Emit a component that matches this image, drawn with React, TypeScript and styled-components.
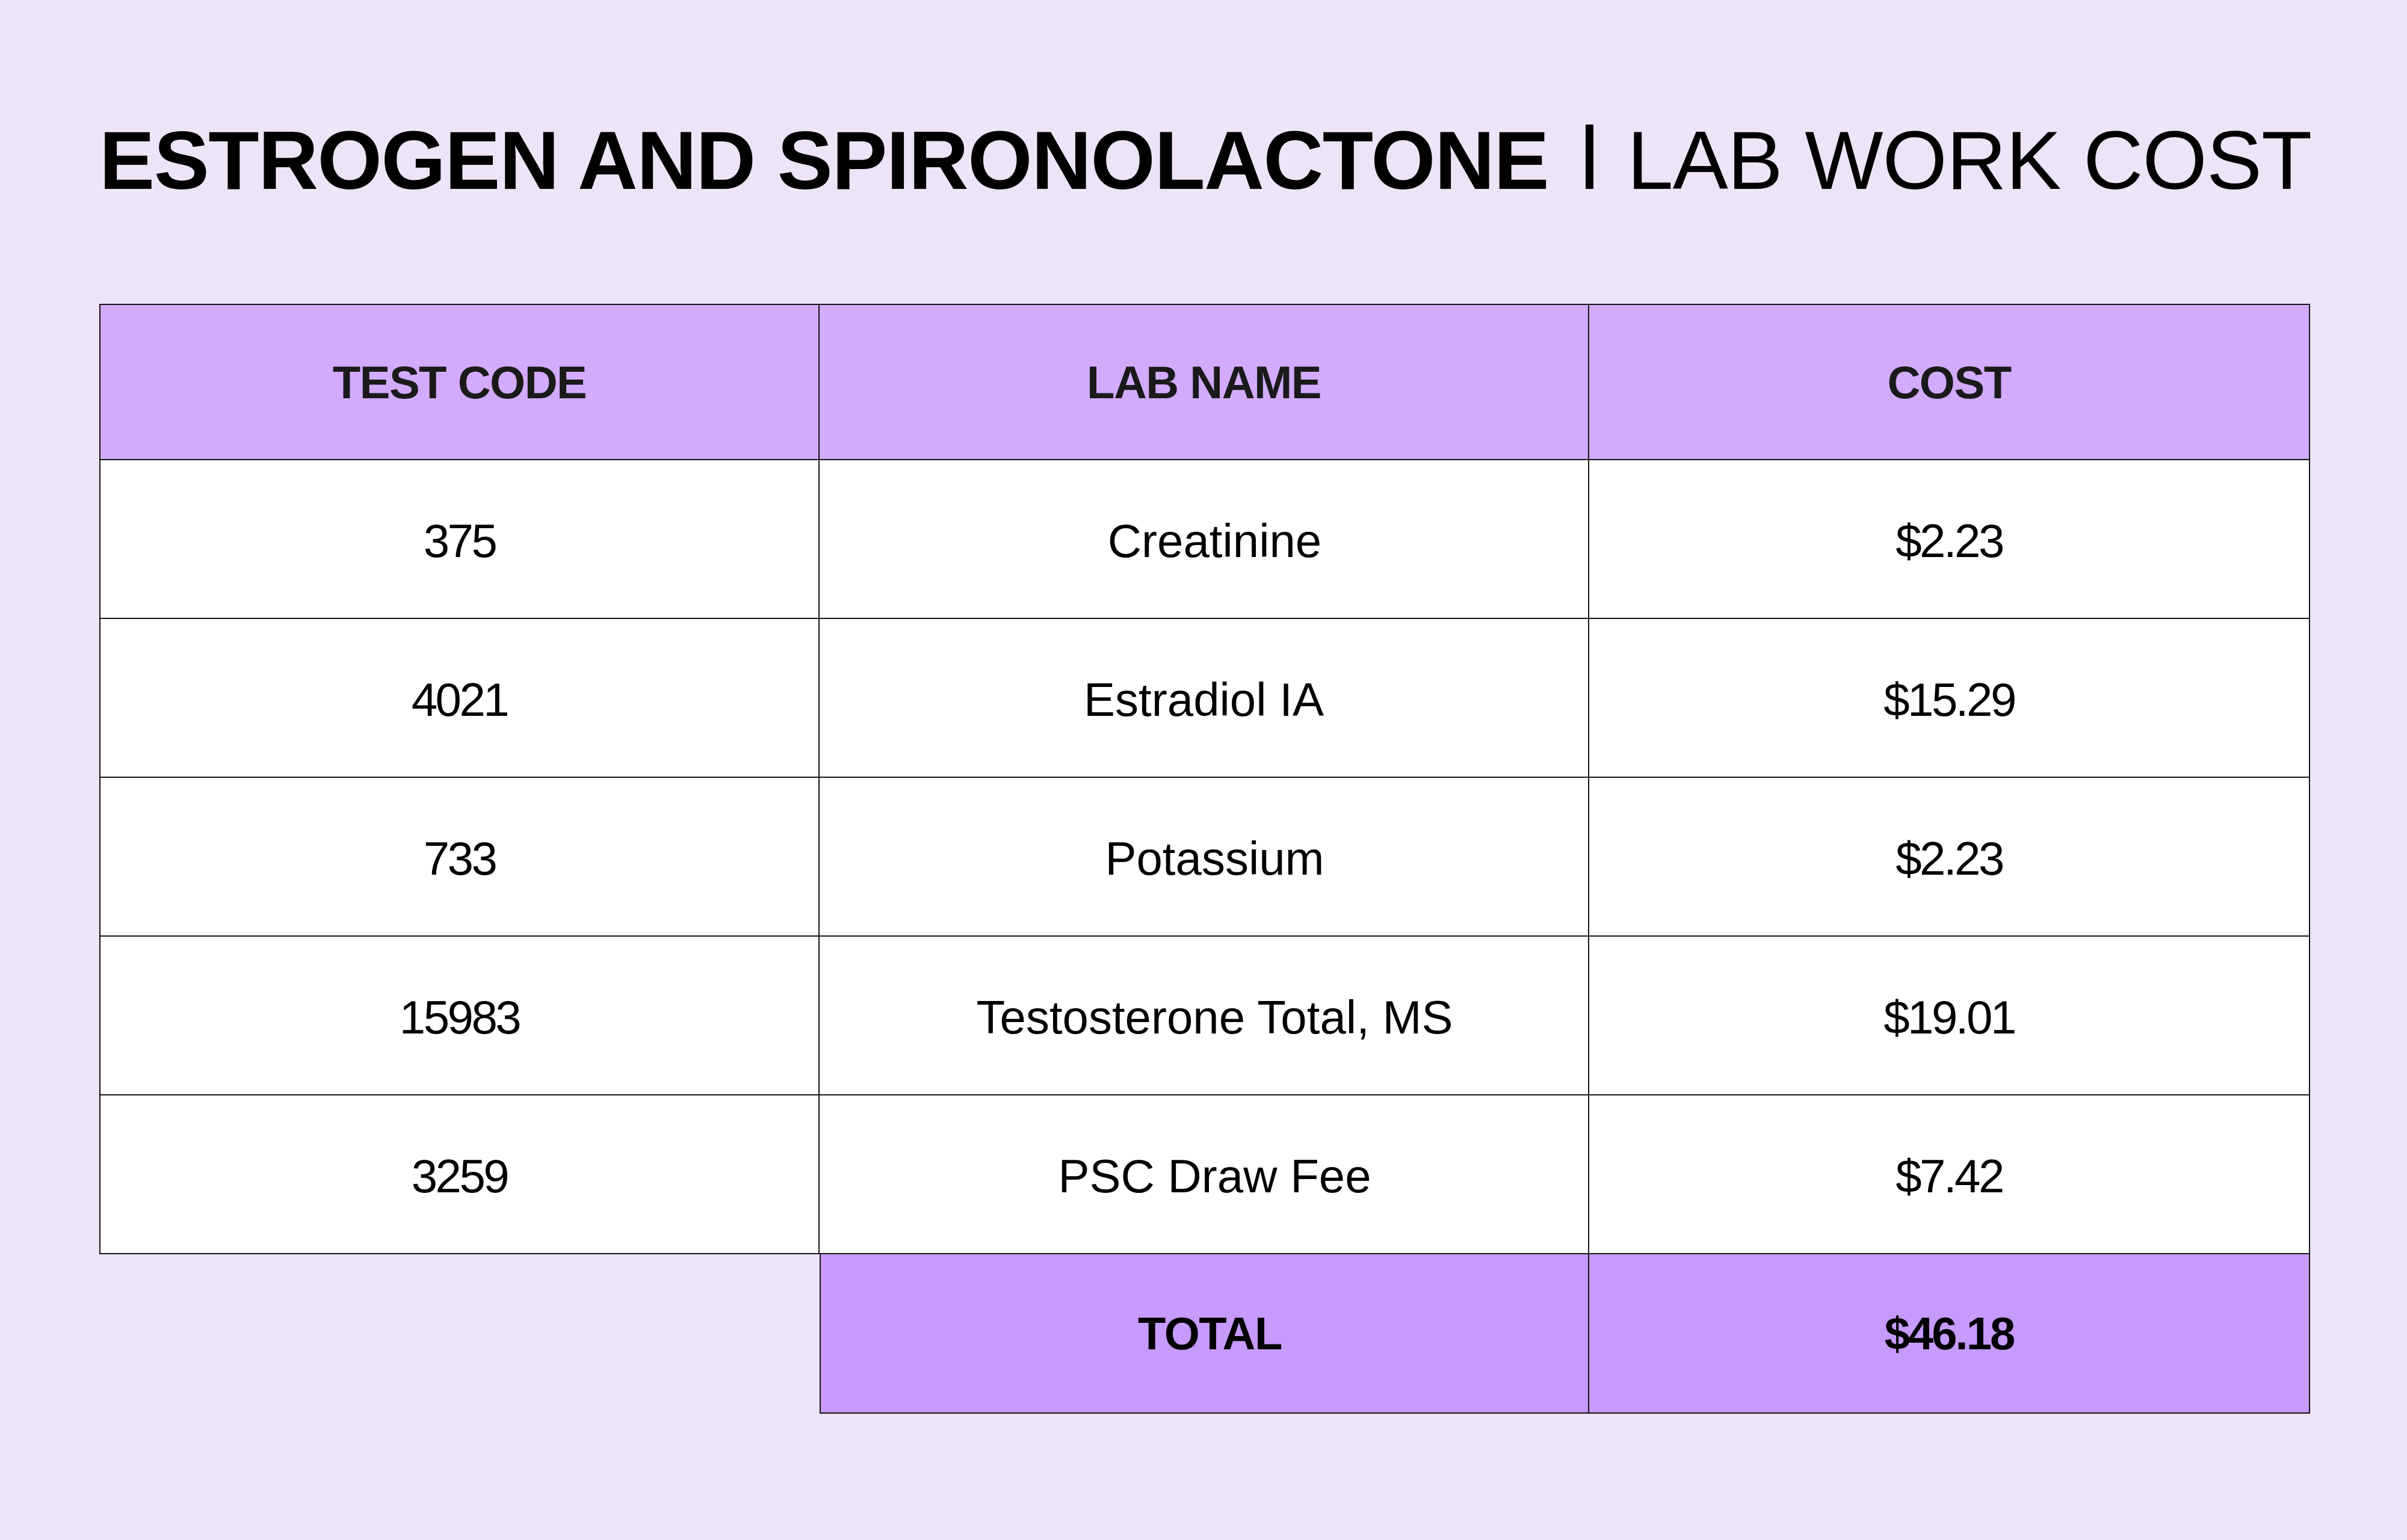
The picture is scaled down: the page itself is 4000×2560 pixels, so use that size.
import React from 'react'
import styled, { createGlobalStyle, css } from 'styled-components'

const GlobalStyle = createGlobalStyle`
  html, body {
    margin: 0;
    padding: 0;
    background: #ede4f7;
  }
  body {
    font-family: 'Liberation Sans', Arial, sans-serif;
    color: #000;
  }
`

const Page = styled.div`
  min-height: 100vh;
  box-sizing: border-box;
  padding: 197px 0 0 165px;
`

const Title = styled.h1`
  margin: 0;
  font-size: 138px;
  line-height: 1;
  font-weight: 400;
  letter-spacing: -1px;
  white-space: nowrap;
  color: #000;
`

const TitleStrong = styled.span`
  font-weight: 700;
  letter-spacing: -1.4px;
`

const Separator = styled.span`
  display: inline-block;
  width: 13px;
  height: 107px;
  margin: 0 56px 0 62px;
  background: #000;
`

const Table = styled.div`
  margin-top: 170px;
  display: grid;
  grid-template-columns: 1197px 1279px 1198px;
  grid-template-rows: 260px repeat(5, 264px) 265px;
`

type CellProps = {
  $kind: 'head' | 'body' | 'total' | 'blank'
  $first?: boolean
  $numeric?: boolean
  $indent?: number
}

const Cell = styled.div<CellProps>`
  box-sizing: border-box;
  display: flex;
  align-items: center;
  justify-content: center;
  font-size: 78px;
  background: #fff;
  border-right: 2px solid #141414;
  border-bottom: 2px solid #141414;
  padding-top: ${(p) => (p.$kind === 'body' ? '6px' : '0')};
  padding-left: ${(p) => p.$indent ?? 0}px;
  ${(p) => p.$first && css`border-left: 2px solid #141414;`}
  ${(p) => p.$numeric && css`letter-spacing: -3.5px;`}

  ${(p) =>
    p.$kind === 'head' &&
    css`
      background: #d2abfd;
      border-top: 2px solid #141414;
      font-weight: 700;
      font-size: 76px;
      letter-spacing: -1.5px;
      color: #1a1a1a;
    `}

  ${(p) =>
    p.$kind === 'total' &&
    css`
      background: #c79afe;
      font-weight: 700;
      font-size: 76px;
      letter-spacing: ${p.$numeric ? '-3px' : '-1.5px'};
    `}

  ${(p) =>
    p.$kind === 'blank' &&
    css`
      background: transparent;
      border: none;
    `}
`

const rows = [
  { code: '375', name: 'Creatinine', cost: '$2.23', indent: 36 },
  { code: '4021', name: 'Estradiol IA', cost: '$15.29', indent: 0 },
  { code: '733', name: 'Potassium', cost: '$2.23', indent: 36 },
  { code: '15983', name: 'Testosterone Total, MS', cost: '$19.01', indent: 36 },
  { code: '3259', name: 'PSC Draw Fee', cost: '$7.42', indent: 36 },
]

const App: React.FC = () => {
  return (
    <>
      <GlobalStyle />
      <Page>
        <Title>
          <TitleStrong>ESTROGEN AND SPIRONOLACTONE</TitleStrong>
          <Separator aria-hidden="true" />
          LAB WORK COST
        </Title>

        <Table>
          <Cell $kind="head" $first>TEST CODE</Cell>
          <Cell $kind="head">LAB NAME</Cell>
          <Cell $kind="head">COST</Cell>

          {rows.map((row) => (
            <React.Fragment key={row.code}>
              <Cell $kind="body" $first $numeric>{row.code}</Cell>
              <Cell $kind="body" $indent={row.indent}>{row.name}</Cell>
              <Cell $kind="body" $numeric>{row.cost}</Cell>
            </React.Fragment>
          ))}

          <Cell $kind="blank" />
          <Cell $kind="total" $first $indent={18}>TOTAL</Cell>
          <Cell $kind="total" $numeric>$46.18</Cell>
        </Table>
      </Page>
    </>
  )
}

export default App
